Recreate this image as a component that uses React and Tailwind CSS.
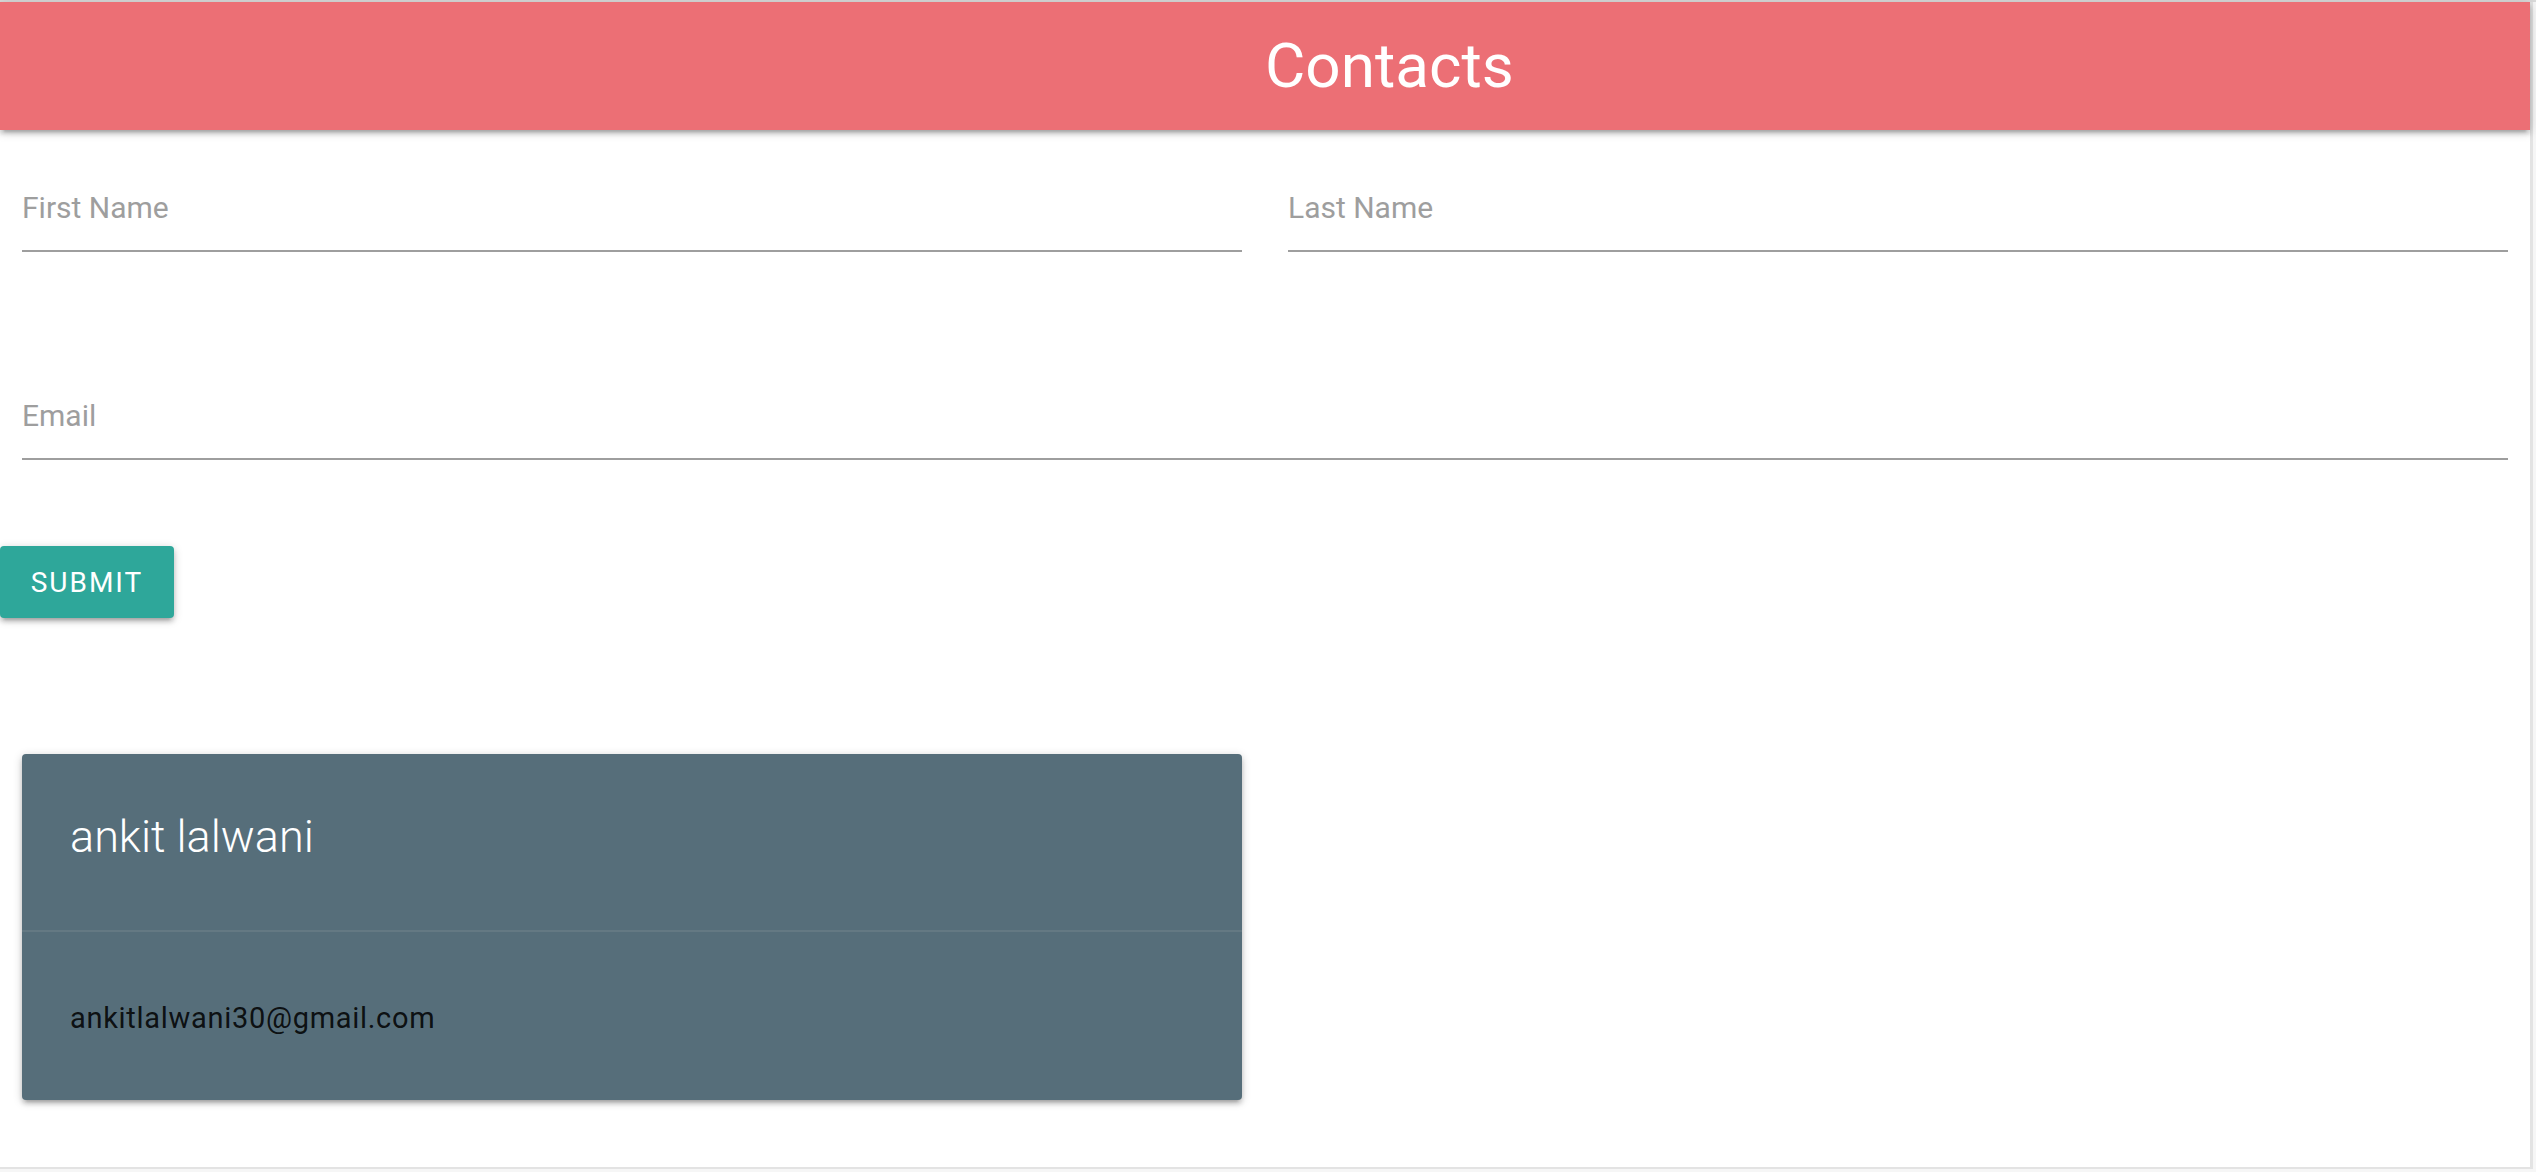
import React from "react";

function Field({ label }) {
  return (
    <div className="pb-[24px] border-b-2 border-[#9e9e9e]">
      <div className="text-[30px] leading-[36px] text-[#9e9e9e]">{label}</div>
    </div>
  );
}

export default function App() {
  return (
    <div className="w-full h-[1172px] bg-[#f6f6f6] flex flex-col font-['Roboto',sans-serif] overflow-hidden">
      <div className="h-[2px] w-full bg-[#dadada]" />
      <div className="w-[2533px] h-[1167px] bg-white border-r-[3px] border-b-2 border-[#e3e3e3] flex flex-col">
        <header className="relative z-10 h-[128px] shrink-0 bg-[#ec6f75] flex items-center pl-[50%] shadow-[0_4px_4px_0_rgba(0,0,0,0.14),0_6px_2px_-4px_rgba(0,0,0,0.12),0_2px_10px_0_rgba(0,0,0,0.2)]">
          <span className="text-[62px] leading-[62px] text-white whitespace-nowrap">Contacts</span>
        </header>

        <div className="grid grid-cols-2 gap-x-[46px] px-[22px] pt-[60px]">
          <Field label="First Name" />
          <Field label="Last Name" />
        </div>

        <div className="px-[22px] mt-[146px]">
          <Field label="Email" />
        </div>

        <div className="mt-[86px]">
          <button className="w-[174px] h-[72px] pt-[2px] rounded-[4px] bg-[#2ea79a] text-white text-[28px] tracking-[2px] uppercase flex items-center justify-center shadow-[0_4px_4px_0_rgba(0,0,0,0.14),0_6px_2px_-4px_rgba(0,0,0,0.12),0_2px_10px_0_rgba(0,0,0,0.2)]">
            Submit
          </button>
        </div>

        <div className="grid grid-cols-2 gap-x-[46px] px-[22px] mt-[136px]">
          <div className="h-[346px] rounded-[4px] bg-[#566e7a] flex flex-col shadow-[0_4px_4px_0_rgba(0,0,0,0.14),0_6px_2px_-4px_rgba(0,0,0,0.12),0_2px_10px_0_rgba(0,0,0,0.2)]">
            <div className="h-[176px] px-[48px] pt-[51px]">
              <div className="text-[45px] leading-[64px] font-light text-white">ankit lalwani</div>
            </div>
            <div className="h-[170px] border-t-2 border-[#647983] px-[48px] pt-[66px]">
              <div className="text-[29px] leading-[40px] tracking-[0.7px] text-[rgba(0,0,0,0.87)]">ankitlalwani30@gmail.com</div>
            </div>
          </div>
          <div />
        </div>
      </div>
    </div>
  );
}
